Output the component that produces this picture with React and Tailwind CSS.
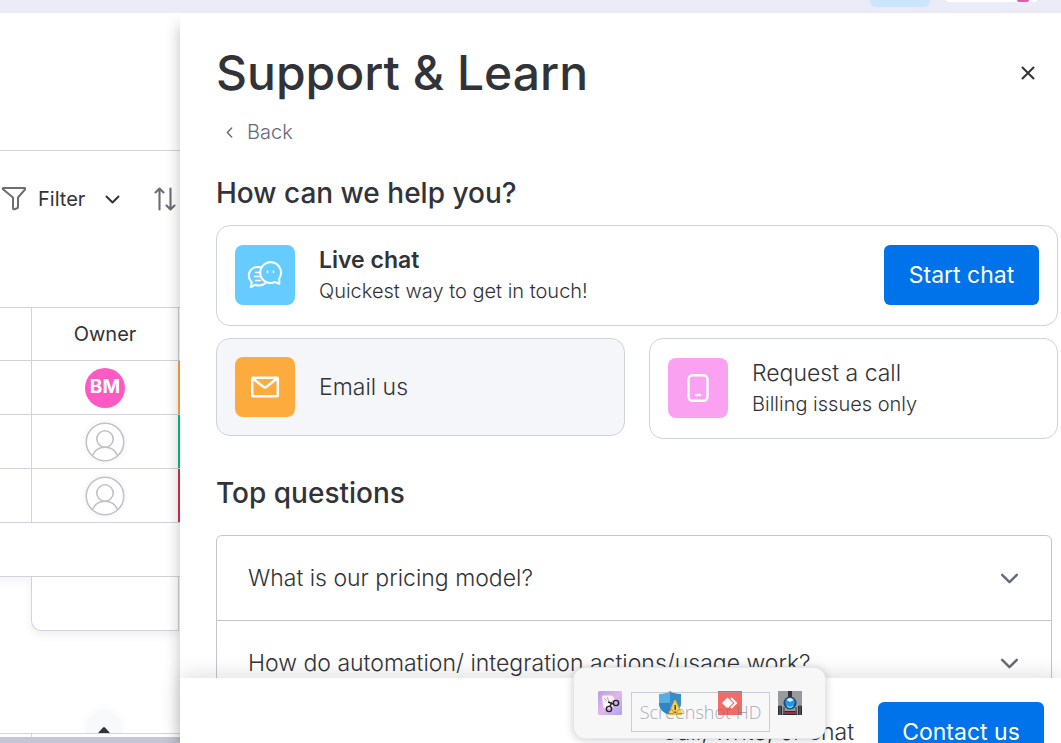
import React, { useState } from "react";

const owners = [
  { initials: "BM", status: "bg-[#fdab3d]" },
  { initials: "", status: "bg-[#00c875]" },
  { initials: "", status: "bg-[#df2f4a]" },
];

const questions = [
  "What is our pricing model?",
  "How do automation/ integration actions/usage work?",
];

function Chevron({ className }) {
  return (
    <svg viewBox="0 0 20 12" className={className} fill="none" stroke="currentColor" strokeWidth="2.6" strokeLinecap="round" strokeLinejoin="round">
      <path d="M2 2l8 8 8-8" />
    </svg>
  );
}

function FilterIcon() {
  return (
    <svg viewBox="0 0 26 26" className="size-[26px]" fill="none" stroke="#6b6c74" strokeWidth="2" strokeLinejoin="round">
      <path d="M3.500 2h21c.8 0 1.100.7.6 1.300L18 11.500v9.500c0 .7-.3 1.100-.9 1.300l-2.700.9c-.8.3-1.400-.2-1.400-1v-10.700L3 3.300C2.500 2.700 2.800 2 3.500 2z" />
    </svg>
  );
}

function SortIcon() {
  return (
    <svg viewBox="0 0 22 24" className="h-6 w-[22px] shrink-0" fill="none" stroke="#6b6c74" strokeWidth="2.1" strokeLinecap="round" strokeLinejoin="round">
      <path d="M5.500 22.500V2M1.500 5.500L5.500 1.500l4 4M16.500 1.500V22M12.500 18.500l4 4 4-4" />
    </svg>
  );
}

function EmptyAvatar() {
  return (
    <svg viewBox="0 0 40 40" className="size-10 rounded-full shadow-[0_0_5px_rgba(0,0,0,0.08)]" fill="none" stroke="#c0c1c6" strokeWidth="1.6">
      <circle cx="20" cy="20" r="18.800" fill="#fff" />
      <circle cx="20" cy="17" r="8.200" />
      <path d="M7.500 33.500C9.500 28.500 14.300 25.200 20 25.200s10.500 3.300 12.500 8.300" />
    </svg>
  );
}

function ChatIcon() {
  return (
    <svg viewBox="0 0 36 28" className="h-7 w-9" fill="none" stroke="#fff" strokeWidth="2" strokeLinecap="round" strokeLinejoin="round">
      <path d="M13 6.200C7 4.800 1.800 9 1.800 14.600c0 2.700 1.100 5 3 6.700l-1 4.900 4.300-2.400c4.200 1.500 8.700.4 11.200-2.900" />
      <path d="M32.300 17.300A10.400 10.400 0 1 0 28 21l4.300 1.800z" />
      <path d="M8.500 11.500h4M7.500 15.500h5M8.500 19.500h5M20.500 10v1.600M26.500 10v1.600" strokeWidth="1.5" />
    </svg>
  );
}

function MailIcon() {
  return (
    <svg viewBox="0 0 30 22" className="h-[22px] w-[30px]" fill="none" stroke="#fff" strokeWidth="2.5" strokeLinecap="round" strokeLinejoin="round">
      <rect x="2.200" y="1.700" width="25.600" height="18.600" rx=".8" />
      <path d="M2.800 2.300l10.500 8.500c1 .8 2.300.8 3.300 0L27.200 2.300" />
    </svg>
  );
}

function PhoneIcon() {
  return (
    <svg viewBox="0 0 22 30" className="h-[30px] w-[22px]" fill="none" stroke="#fff" strokeWidth="2.4" strokeLinecap="round">
      <rect x="1.500" y="2.200" width="19" height="25.600" rx="4" />
      <path d="M9 22h4" />
    </svg>
  );
}

function Board() {
  return (
    <div className="flex w-[180px] shrink-0 flex-col overflow-hidden">
      <div className="h-[138px] shrink-0 border-b border-[#d2d3da]" />
      <div className="flex h-[156px] shrink-0 items-start pt-8">
        <button className="flex h-8 items-center text-[20px] text-[#323338]">
          <FilterIcon />
          <span className="ml-3">Filter</span>
          <Chevron className="ml-5 h-[9px] w-[15px]" />
        </button>
        <button aria-label="Sort" className="ml-[34px] flex h-8 items-center">
          <SortIcon />
        </button>
      </div>
      <table className="w-full table-fixed border-separate border-spacing-0 text-center text-[#323338]">
        <thead>
          <tr className="h-[53px]">
            <th className="w-[31px] border-t border-[#d2d3da] p-0" />
            <th className="border-l border-t border-[#d2d3da] p-0 text-[20px] font-normal">Owner</th>
            <th className="w-[2px] border-l border-t border-[#d2d3da] p-0" />
          </tr>
        </thead>
        <tbody>
          {owners.map((owner, i) => (
            <tr key={i} className="h-[54px]">
              <td className="border-t border-[#d2d3da] p-0" />
              <td className="border-l border-t border-[#d2d3da] p-0">
                <div className="flex items-center justify-center">
                  {owner.initials ? (
                    <div className="flex size-10 items-center justify-center rounded-full bg-[#ff5ac4] text-[19px] font-bold text-white">
                      {owner.initials}
                    </div>
                  ) : (
                    <EmptyAvatar />
                  )}
                </div>
              </td>
              <td className={`border-t border-[#d2d3da] p-0 ${owner.status}`} />
            </tr>
          ))}
          <tr className="h-[54px]">
            <td colSpan={3} className="border-t border-[#d2d3da] p-0" />
          </tr>
        </tbody>
      </table>
      <div className="flex h-[55px] shrink-0 border-t border-[#d2d3da]">
        <div className="h-3 w-[31px] bg-linear-to-b from-[#f6f6f7] to-white" />
        <div className="mr-px flex-1 rounded-bl-[10px] border-x border-b border-[#d2d3da] shadow-[0_5px_8px_rgba(0,0,0,0.06)]" />
      </div>
      <div className="flex flex-1 items-end pl-[86px]">
        <div className="flex h-5 w-9 items-end justify-center rounded-t-full bg-[#f8f9fb] shadow-[0_-2px_8px_rgba(0,0,0,0.05)]">
          <svg viewBox="0 0 12 6" className="h-[6px] w-3" fill="#323338">
            <path d="M0 6L5 .5q1-.8 2 0L12 6z" />
          </svg>
        </div>
      </div>
      <div className="h-1 shrink-0 border-t border-[#d0d4e4] pl-[31px]">
        <div className="h-full border-l border-[#d0d4e4]" />
      </div>
      <div className="h-[6px] shrink-0 bg-[#c3c6d6]" />
    </div>
  );
}

function Tile({ color, children }) {
  return (
    <div className={`flex size-[60px] shrink-0 items-center justify-center rounded-lg ${color}`}>
      {children}
    </div>
  );
}

function SupportPanel() {
  const [open, setOpen] = useState(null);

  return (
    <section className="z-10 flex min-w-0 flex-1 flex-col bg-white text-[#323338] shadow-[0_12px_14px_rgba(0,0,0,0.25)]">
      <div className="min-h-0 flex-1 overflow-hidden pr-[3px] pl-9">
        <div className="flex items-center justify-between pt-7 pr-[22px]">
          <h1 className="text-[48px] leading-[64px] font-medium">Support &amp; Learn</h1>
          <button aria-label="Close" className="flex size-4 items-center justify-center">
            <svg viewBox="0 0 14 14" className="size-[14px]" stroke="#323338" strokeWidth="2" strokeLinecap="round">
              <path d="M1.500 1.500l11 11M12.500 1.500l-11 11" />
            </svg>
          </button>
        </div>
        <button className="mt-[13px] flex h-7 items-center pl-2 text-[20px] font-light text-[#676879]">
          <Chevron className="h-[7px] w-[11px] rotate-90" />
          <span className="ml-3">Back</span>
        </button>

        <h2 className="mt-[31px] text-[28px] leading-8 font-medium">How can we help you?</h2>
        <div className="mt-4 flex h-[101px] items-center rounded-[14px] border border-[#d0d2da] px-[18px] pb-px">
          <Tile color="bg-[#66ccff]">
            <ChatIcon />
          </Tile>
          <div className="ml-6 flex-1">
            <h3 className="text-[23px] leading-8 font-semibold">Live chat</h3>
            <p className="text-[20px] leading-[30px] font-light">Quickest way to get in touch!</p>
          </div>
          <button className="h-[60px] w-[155px] rounded-md bg-[#0073ea] text-[23px] text-white">Start chat</button>
        </div>
        <div className="mt-3 grid grid-cols-2 items-start gap-6">
          <button className="flex h-[98px] items-center rounded-[14px] border border-[#d0d2da] bg-[#f5f6fa] px-[18px] text-left">
            <Tile color="bg-[#fdab3d]">
              <MailIcon />
            </Tile>
            <span className="ml-6 text-[23px] font-light">Email us</span>
          </button>
          <button className="flex h-[101px] items-center rounded-[14px] border border-[#d0d2da] px-[18px] pb-px text-left font-light">
            <Tile color="bg-[#faa1f1]">
              <PhoneIcon />
            </Tile>
            <span className="ml-6">
              <span className="block text-[23px] leading-8">Request a call</span>
              <span className="block text-[20px] leading-[30px]">Billing issues only</span>
            </span>
          </button>
        </div>

        <h2 className="mt-[38px] text-[28px] leading-8 font-medium">Top questions</h2>
        <div className="mt-[26px] mr-[6px] rounded-t-md border border-[#c4c5cb]">
          {questions.map((question, i) => (
            <button
              key={question}
              aria-expanded={open === i}
              onClick={() => setOpen(open === i ? null : i)}
              className="flex h-[85px] w-full items-center justify-between border-b border-[#c4c5cb] pr-8 pl-[31px] text-left text-[23px] font-light"
            >
              {question}
              <Chevron className="h-[11px] w-[19px] text-[#676879]" />
            </button>
          ))}
        </div>
      </div>
      <footer className="z-10 flex h-[65px] shrink-0 items-start justify-end overflow-hidden bg-white pt-6 pr-[17px] shadow-[0_-4px_20px_rgba(0,0,0,0.12)]">
        <p className="mr-6 text-[23px] leading-[60px] font-light">Call, write, or chat</p>
        <button className="h-[60px] w-[166px] shrink-0 rounded-md bg-[#0073ea] text-[23px] text-white">Contact us</button>
      </footer>
    </section>
  );
}

function TrayPopup() {
  return (
    <div className="absolute bottom-1 left-[573px] z-20 flex h-[72px] w-[253px] items-start justify-between rounded-xl border border-gray-200 bg-[#f7f7f7] pr-[23px] pl-6 pt-[23px] shadow-[0_1px_8px_rgba(0,0,0,0.2)]">
      <svg viewBox="0 0 24 24" className="size-6">
        <defs>
          <linearGradient id="snip" x1="0" y1="0" x2="1" y2="1">
            <stop offset="0" stopColor="#bd9be0" />
            <stop offset=".5" stopColor="#e1b8e8" />
            <stop offset="1" stopColor="#aaa4f5" />
          </linearGradient>
        </defs>
        <rect width="24" height="24" rx="1.500" fill="url(#snip)" />
        <path d="M4 6q0-1.500 1.500-1.500H13q2 0 2.500 2l1 4-3 7H8q-3 0-3-3z" fill="#fbf3fb" />
        <path d="M6 7l3 3M9 6l3 6 4 1M15 9l-4 7" stroke="#aaa" strokeWidth="1" fill="none" />
        <g fill="none" stroke="#222" strokeWidth="1.400">
          <circle cx="18" cy="12" r="2.600" />
          <circle cx="11" cy="18" r="2.600" />
          <path d="M15.500 13L10 11M12 15.500l2-4" />
        </g>
      </svg>
      <svg viewBox="0 0 24 26" className="h-[26px] w-6">
        <path d="M12 0C9 2.300 5 3 1 3v9c0 6 4 9.500 11 12z" fill="#42a5df" />
        <path d="M12 0c3 2.300 7 3 11 3v9c0 6-4 9.500-11 12z" fill="#217fc4" />
        <path d="M1 12h11v12C5 21.500 1 18 1 12z" fill="#1976bd" />
        <path d="M17 9l7 14.500H10.500z" fill="#ffcd35" stroke="#e9b52c" strokeLinejoin="round" />
        <path d="M17.200 14v5M17.200 20.500v1.500" stroke="#333" strokeWidth="1.500" />
      </svg>
      <svg viewBox="0 0 24 24" className="size-6">
        <rect width="24" height="24" fill="#ef5b56" />
        <path d="M9.500 6.500L15 12l-5.500 5.500L4 12z" fill="#fff" />
        <path d="M13 7l5 5-5 5" fill="none" stroke="#fff" strokeWidth="2" />
      </svg>
      <svg viewBox="0 0 24 24" className="size-6">
        <rect width="24" height="24" fill="#999a9e" />
        <path d="M0 15h4v9H0zM20 15h4v9h-4zM5 20h14v4H5z" fill="#292b31" />
        <path d="M5 22h14" stroke="#9e3038" strokeWidth="2" />
        <path d="M2 14v10M22 14v10M6 16v6M18 16v6" stroke="#555960" strokeWidth="1.500" />
        <path d="M10 0h4v6h-4z" fill="#33353a" />
        <circle cx="12" cy="12" r="6.500" fill="#1d4777" />
        <circle cx="12" cy="11.500" r="4.800" fill="#2594e9" />
        <path d="M8.500 9q3.500-4 7 0l-3.500 2z" fill="#d9f5ff" />
        <path d="M9 15q3 3 6 0" stroke="#67e0ee" strokeWidth="1.500" fill="none" />
      </svg>
      <div className="absolute top-6 left-[57px] flex h-10 w-[139px] items-center justify-center border border-gray-400/50 bg-white/10 font-['Open_Sans',sans-serif] text-[18px] font-light text-gray-500/60">
        Screenshot HD
      </div>
    </div>
  );
}

function App() {
  return (
    <div className="relative flex h-screen flex-col overflow-hidden bg-white font-['Inter',sans-serif]">
      <header className="flex h-[13px] shrink-0 items-start justify-end bg-[#ebecf8] pr-6">
        <div className="h-[7px] w-[60px] rounded-b-md bg-[#cce5ff]" />
        <div className="ml-4 flex h-[2px] w-[91px] justify-end overflow-hidden rounded-b bg-white pr-2">
          <div className="h-[2px] w-3 rounded-b-full bg-[#e05aae]" />
        </div>
      </header>
      <div className="flex min-h-0 flex-1">
        <Board />
        <SupportPanel />
      </div>
      <TrayPopup />
    </div>
  );
}

export default App;
